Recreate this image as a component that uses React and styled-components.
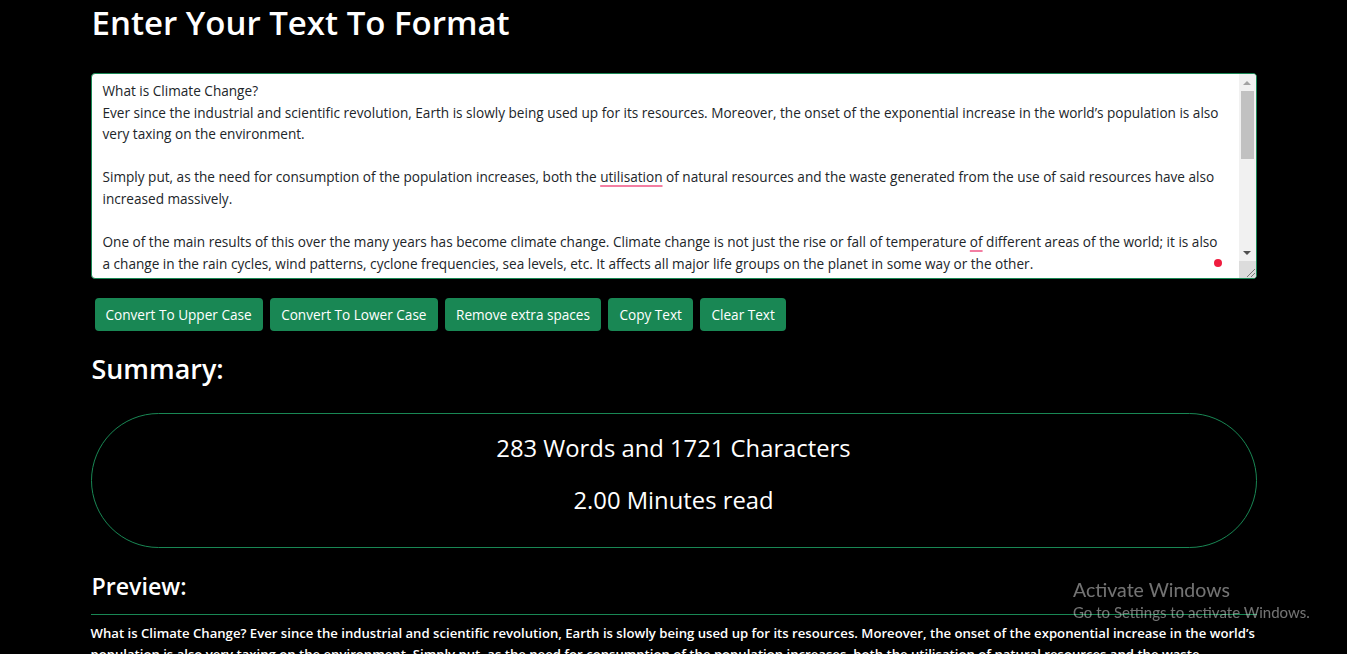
import React from 'react';
import styled, { createGlobalStyle } from 'styled-components';

const GlobalStyle = createGlobalStyle`
	html, body {
		margin: 0;
		padding: 0;
		background: #000;
		overflow: hidden;
	}
	body {
		font-family: 'Open Sans', sans-serif;
		color: #fff;
	}
`;

const Page = styled.div`
	width: 1166px;
	margin: 0 auto;
	padding-top: 1px;
`;

const Title = styled.h1`
	font-size: 33px;
	font-weight: 600;
	line-height: 40px;
	margin: 2px 0 30px 1px;
`;

const EditorWrap = styled.div`
	position: relative;
`;

const Editor = styled.div`
	display: flex;
	height: 206px;
	box-sizing: border-box;
	border: 1px solid #198754;
	border-radius: 4px;
	background: #fff;
	overflow: hidden;
`;

const EditorText = styled.div`
	flex: 1;
	overflow: hidden;
	color: #212529;
	font-size: 13.6px;
	line-height: 21.6px;
	padding: 6px 11px;
	white-space: pre-wrap;
`;

const ScrollBar = styled.div`
	width: 17px;
	display: flex;
	flex-direction: column;
	background: #f1f1f1;
`;

const ScrollButton = styled.div`
	height: 17px;
	display: flex;
	align-items: center;
	justify-content: center;
`;

const Track = styled.div`
	flex: 1;
	padding: 0 2px;
`;

const Thumb = styled.div`
	height: 68px;
	background: #c1c1c1;
`;

const Corner = styled.div`
	height: 17px;
	background: #dcdcdc;
	display: flex;
	align-items: flex-end;
	justify-content: flex-end;
`;

const Misspelt = styled.span`
	text-decoration: underline;
	text-decoration-color: #f37ea2;
	text-decoration-thickness: 2px;
	text-underline-offset: 3px;
`;

const Dot = styled.span`
	position: absolute;
	right: 35px;
	bottom: 12px;
	width: 8px;
	height: 8px;
	border-radius: 50%;
	background: #ef1d3f;
`;

const Toolbar = styled.div`
	display: flex;
	gap: 7.5px;
	margin: 19px 0 0 4px;
`;

const Button = styled.button`
	background: #198754;
	color: #fff;
	border: none;
	border-radius: 4px;
	height: 33px;
	padding: 0 11px;
	font-family: 'Open Sans', sans-serif;
	font-size: 13.6px;
	cursor: pointer;
`;

const SectionTitle = styled.h2`
	font-size: ${(p) => p.size}px;
	font-weight: 600;
	line-height: 1.2;
	margin: ${(p) => p.margin};
	margin-left: 1px;
`;

const SummaryBox = styled.div`
	border: 1px solid #198754;
	border-radius: 70px;
	height: 135px;
	box-sizing: border-box;
	display: flex;
	flex-direction: column;
	align-items: center;
	justify-content: center;
	gap: 20px;
	font-size: 23.8px;
	padding-bottom: 14px;
`;

const Rule = styled.hr`
	border: none;
	border-top: 1px solid #198754;
	margin: 13px 0 8px;
`;

const PreviewText = styled.p`
	margin: 0;
	font-size: 13.15px;
	font-weight: 600;
	line-height: 21px;
`;

const Watermark = styled.div`
	position: fixed;
	left: 1073px;
	top: 578px;
	color: rgba(255, 255, 255, 0.45);
	font-family: Lato, sans-serif;
	pointer-events: none;
`;

const WatermarkTitle = styled.div`
	font-size: 19.5px;
	line-height: 24px;
`;

const WatermarkSub = styled.div`
	font-size: 15px;
	line-height: 20px;
`;

const buttons = [
	'Convert To Upper Case',
	'Convert To Lower Case',
	'Remove extra spaces',
	'Copy Text',
	'Clear Text',
];

const preview =
	"What is Climate Change? Ever since the industrial and scientific revolution, Earth is slowly being used up for its resources. Moreover, the onset of the exponential increase in the world’s population is also very taxing on the environment. Simply put, as the need for consumption of the population increases, both the utilisation of natural resources and the waste generated from the use of said resources have also increased massively.";

const App = () => (
	<>
		<GlobalStyle />
		<Page>
			<Title>Enter Your Text To Format</Title>
			<EditorWrap>
				<Editor>
					<EditorText>
						{'What is Climate Change?\nEver since the industrial and scientific revolution, Earth is slowly being used up for its resources. Moreover, the onset of the exponential increase in the world’s population is also very taxing on the environment.\n\nSimply put, as the need for consumption of the population increases, both the '}
						<Misspelt>utilisation</Misspelt>
						{' of natural resources and the waste generated from the use of said resources have also increased massively.\n\nOne of the main results of this over the many years has become climate change. Climate change is not just the rise or fall of temperature '}
						<Misspelt>of</Misspelt>
						{' different areas of the world; it is also a change in the rain cycles, wind patterns, cyclone frequencies, sea levels, etc. It affects all major life groups on the planet in some way or the other.\n\nWhat are the Effects of Climate Change?\nThe rising temperature of the planet causes several effects.'}
					</EditorText>
					<ScrollBar>
						<ScrollButton>
							<svg width="8" height="4" viewBox="0 0 8 4">
								<polygon points="0,4 4,0 8,4" fill="#a3a3a3" />
							</svg>
						</ScrollButton>
						<Track>
							<Thumb />
						</Track>
						<ScrollButton>
							<svg width="8" height="4" viewBox="0 0 8 4">
								<polygon points="0,0 8,0 4,4" fill="#505050" />
							</svg>
						</ScrollButton>
						<Corner>
							<svg width="12" height="12" viewBox="0 0 12 12">
								<path d="M11 3 L3 11 M11 7 L7 11" stroke="#7a7a7a" strokeWidth="1" />
							</svg>
						</Corner>
					</ScrollBar>
				</Editor>
				<Dot />
			</EditorWrap>
			<Toolbar>
				{buttons.map((b) => (
					<Button key={b}>{b}</Button>
				))}
			</Toolbar>
			<SectionTitle size={26.9} margin="22px 0 28px">Summary:</SectionTitle>
			<SummaryBox>
				<div>283 Words and 1721 Characters</div>
				<div>2.00 Minutes read</div>
			</SummaryBox>
			<SectionTitle as="h3" size={23.2} margin="25px 0 0">Preview:</SectionTitle>
			<Rule />
			<PreviewText>{preview}</PreviewText>
		</Page>
		<Watermark>
			<WatermarkTitle>Activate Windows</WatermarkTitle>
			<WatermarkSub>Go to Settings to activate Windows.</WatermarkSub>
		</Watermark>
	</>
);

export default App;
